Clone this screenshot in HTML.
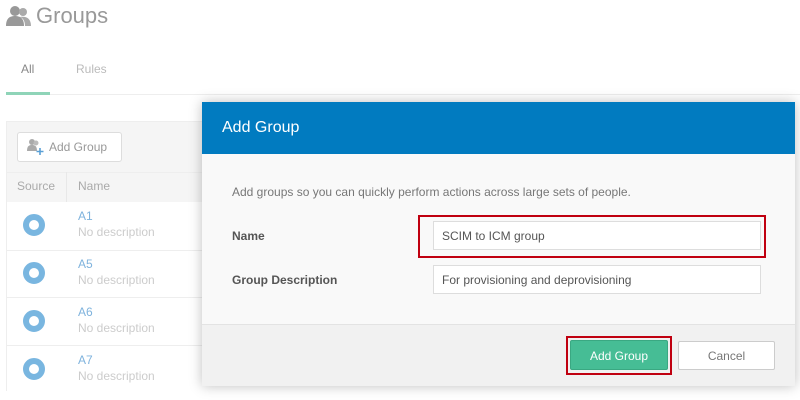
<!DOCTYPE html>
<html><head><style>
*{box-sizing:border-box;margin:0;padding:0}
body{width:800px;height:400px;overflow:hidden;background:#fff;font-family:"Liberation Sans",sans-serif;position:relative}
.abs{position:absolute}
</style></head><body>
<!-- header -->
<svg class="abs" style="left:6px;top:5px" width="26" height="22" viewBox="0 0 26 22"><circle cx="9" cy="6" r="5" fill="#999"/><path d="M0 21 C0 13 4 11 9 11 C14 11 18 13 18 21Z" fill="#999"/><circle cx="17" cy="7" r="4" fill="#aaa"/><path d="M14 12 C20 11 25 13 25 21 L19 21 C19 16 17 13 14 12Z" fill="#aaa"/></svg>
<div class="abs" style="left:36px;top:3px;font-size:22px;color:#999">Groups</div>
<div class="abs" style="left:21px;top:62px;font-size:12px;color:#888">All</div>
<div class="abs" style="left:76px;top:62px;font-size:12px;color:#bbb">Rules</div>
<div class="abs" style="left:6px;top:92px;width:44px;height:3px;background:#8fd4b8"></div>
<div class="abs" style="left:50px;top:94px;width:750px;height:1px;background:#eee"></div>
<!-- card -->
<div class="abs" style="left:6px;top:121px;width:200px;height:270px;background:#f5f5f5;border:1px solid #eee"></div>
<div class="abs" style="left:17px;top:132px;width:105px;height:30px;background:#fff;border:1px solid #ddd;border-radius:3px;font-size:12px;color:#999;padding:7px 0 0 31px">Add Group</div>
<svg class="abs" style="left:27px;top:138px" width="18" height="18" viewBox="0 0 18 18"><circle cx="5" cy="4" r="3" fill="#aaa"/><path d="M0 13 C0 8 2 7 5 7 C8 7 10 8 10 13Z" fill="#aaa"/><circle cx="9" cy="5" r="2.5" fill="#bbb"/><path d="M13 10 V17 M9.5 13.5 H16.5" stroke="#5aa0d6" stroke-width="1.6"/></svg>
<div class="abs" style="left:6px;top:172px;width:200px;height:30px;border-top:1px solid #eee"></div>
<div class="abs" style="left:17px;top:179px;font-size:12px;color:#aaa">Source</div>
<div class="abs" style="left:66px;top:172px;width:1px;height:30px;background:#e8e8e8"></div>
<div class="abs" style="left:78px;top:179px;font-size:12px;color:#aaa">Name</div>
<div class="abs" style="left:7px;top:202px;width:199px;height:189px;background:#fff"></div>
<div class="abs" style="left:7px;top:250px;width:199px;height:1px;background:#eee"></div>
<div class="abs" style="left:7px;top:297px;width:199px;height:1px;background:#eee"></div>
<div class="abs" style="left:7px;top:345px;width:199px;height:1px;background:#eee"></div>
<div class="abs" style="left:23px;top:214px;width:22px;height:22px;border:6px solid #79b6e0;border-radius:50%"></div>
<div class="abs" style="left:23px;top:262px;width:22px;height:22px;border:6px solid #79b6e0;border-radius:50%"></div>
<div class="abs" style="left:23px;top:310px;width:22px;height:22px;border:6px solid #79b6e0;border-radius:50%"></div>
<div class="abs" style="left:23px;top:358px;width:22px;height:22px;border:6px solid #79b6e0;border-radius:50%"></div>
<div class="abs" style="left:78px;top:208px;font-size:12px;line-height:16px;color:#7fb3dd">A1<br><span style="color:#ccc">No description</span></div>
<div class="abs" style="left:78px;top:256px;font-size:12px;line-height:16px;color:#7fb3dd">A5<br><span style="color:#ccc">No description</span></div>
<div class="abs" style="left:78px;top:304px;font-size:12px;line-height:16px;color:#7fb3dd">A6<br><span style="color:#ccc">No description</span></div>
<div class="abs" style="left:78px;top:352px;font-size:12px;line-height:16px;color:#7fb3dd">A7<br><span style="color:#ccc">No description</span></div>
<!-- modal -->
<div class="abs" style="left:202px;top:102px;width:593px;height:284px;background:#f9f9f9;box-shadow:0 0 12px rgba(0,0,0,.25)"></div>
<div class="abs" style="left:202px;top:102px;width:593px;height:52px;background:#017bc0;color:#fff;font-size:16px;padding:17px 0 0 20px">Add Group</div>
<div class="abs" style="left:202px;top:324px;width:593px;height:62px;background:#f1f1f1;border-top:1px solid #e3e3e3"></div>
<div class="abs" style="left:232px;top:185px;font-size:12px;color:#777">Add groups so you can quickly perform actions across large sets of people.</div>
<div class="abs" style="left:232px;top:229px;font-size:12px;color:#555;font-weight:bold">Name</div>
<div class="abs" style="left:232px;top:273px;font-size:12px;color:#555;font-weight:bold">Group Description</div>
<div class="abs" style="left:418px;top:215px;width:348px;height:43px;border:2px solid #c00010"></div>
<div class="abs" style="left:433px;top:221px;width:328px;height:29px;background:#fff;border:1px solid #ddd;font-size:12px;color:#555;padding:7px 0 0 8px">SCIM to ICM group</div>
<div class="abs" style="left:433px;top:265px;width:328px;height:29px;background:#fff;border:1px solid #ddd;font-size:12px;color:#555;padding:7px 0 0 8px">For provisioning and deprovisioning</div>
<div class="abs" style="left:566px;top:336px;width:106px;height:39px;border:2px solid #c00010"></div>
<div class="abs" style="left:570px;top:340px;width:98px;height:30px;background:#46bd95;border:1px solid #3aa882;border-radius:2px;color:#fff;font-size:12px;text-align:center;padding-top:8px">Add Group</div>
<div class="abs" style="left:678px;top:341px;width:97px;height:29px;background:#fff;border:1px solid #ccc;border-radius:2px;color:#777;font-size:12px;text-align:center;padding-top:7px">Cancel</div>
</body></html>
